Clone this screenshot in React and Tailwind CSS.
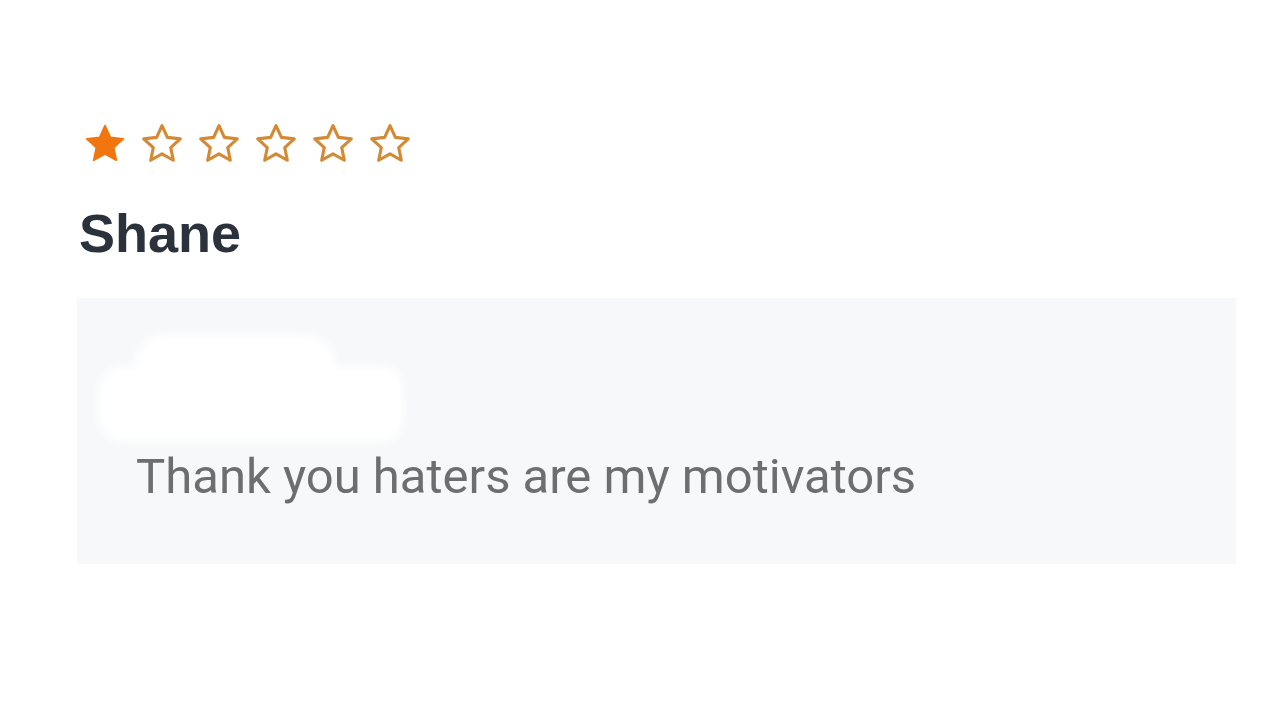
import React from "react";

function Star({ filled }) {
  return (
    <svg width="42" height="40" viewBox="0 0 24 23" className="block">
      <path
        d="M12 1.5l3.09 6.76 7.41.84-5.5 5.02 1.5 7.3L12 17.77l-6.5 3.65 1.5-7.3-5.5-5.02 7.41-.84L12 1.5z"
        fill={filled ? "#f2760f" : "none"}
        stroke={filled ? "#f2760f" : "#d38a33"}
        strokeWidth={filled ? 1 : 1.8}
        strokeLinejoin="round"
      />
    </svg>
  );
}

export default function App() {
  return (
    <div className="w-[1280px] h-[721px] bg-white overflow-hidden">
      <div className="pt-[123px] pl-[84px] flex gap-[15px]">
        {[0, 1, 2, 3, 4, 5].map((i) => (
          <Star key={i} filled={i === 0} />
        ))}
      </div>
      <div
        className="pl-[79px] mt-[40px] text-[54px] leading-[60px] font-bold text-[#2b323c]"
        style={{ fontFamily: '"Liberation Sans", Arial, sans-serif' }}
      >
        Shane
      </div>
      <div className="ml-[77px] mt-[35px] w-[1159px] h-[266px] bg-[#f7f8fa] relative">
        <div className="absolute left-[58px] top-[36px] w-[200px] h-[60px] bg-white rounded-[30px] blur-[5px]" />
        <div className="absolute left-[22px] top-[68px] w-[305px] h-[76px] bg-white rounded-[24px] blur-[5px]" />
        <div
          className="absolute left-[59px] top-[151px] text-[49px] leading-[56px] text-[#6e6e70]"
          style={{ fontFamily: "Roboto, sans-serif" }}
        >
          Thank you haters are my motivators
        </div>
      </div>
    </div>
  );
}
